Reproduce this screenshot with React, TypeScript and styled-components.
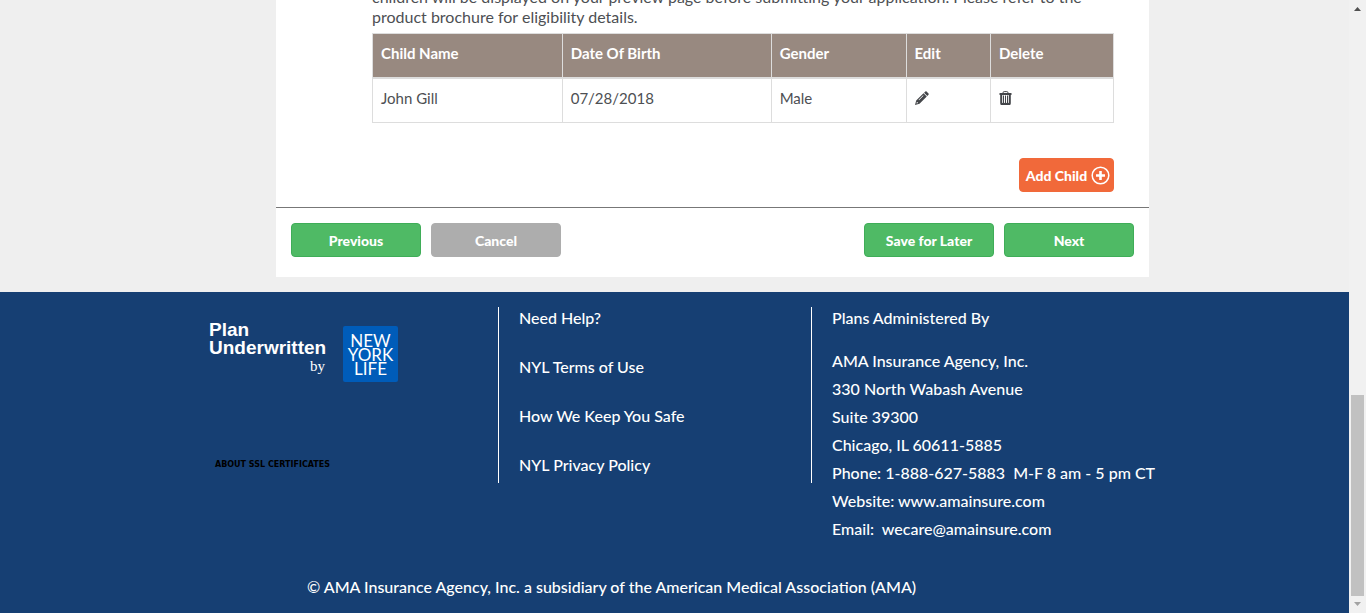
import React from "react";
import styled, { createGlobalStyle, css } from "styled-components";

const GlobalStyle = createGlobalStyle`
  *, *::before, *::after { box-sizing: border-box; }
  body {
    margin: 0;
    background: #efefef;
    color: #4d4f53;
    font-family: Lato, "Liberation Sans", sans-serif;
    font-size: 15px;
    line-height: 20px;
  }
`;

const Window = styled.div`
  display: grid;
  grid-template-columns: minmax(0, 1fr) 17px;
  height: 100vh;
  overflow: hidden;
`;

const Page = styled.div`
  display: flex;
  flex-direction: column;
  justify-content: flex-end;
  min-height: 0;
  overflow: hidden;
`;

const ScrollTrack = styled.div`
  display: flex;
  flex-direction: column;
  justify-content: space-between;
  align-items: center;
  padding: 7px 2px;
  background: #f1f1f1;
`;

const ScrollThumb = styled.div`
  width: 13px;
  height: 201px;
  margin: auto 0 6px;
  background: #c1c1c1;
`;

const Card = styled.main`
  flex: none;
  margin: 0 200px 15px 276px;
  background: #fff;
`;

const Section = styled.section`
  padding: 0 35px 15px 96px;
  border-bottom: 1px solid #777;
`;

const Note = styled.p`
  margin: 0 0 6px;
  font-size: 16px;
`;

const Table = styled.table`
  width: 100%;
  table-layout: fixed;
  border-collapse: collapse;
  border: 1px solid #ddd;
`;

const cell = css`
  padding: 9px 8px;
  border: 1px solid #ddd;
  text-align: left;
  vertical-align: top;
`;

const Th = styled.th`
  ${cell}
  height: 44px;
  border-bottom-width: 2px;
  background: #988980;
  color: #fff;
  font-weight: 700;
`;

const Td = styled.td`
  ${cell}
  height: 45px;
`;

const IconButton = styled.button`
  display: block;
  margin: 3px 0;
  padding: 0;
  border: 0;
  background: none;
  color: #44464a;
  cursor: pointer;

  svg { display: block; }
`;

const AddRow = styled.div`
  display: flex;
  justify-content: flex-end;
  margin-top: 35px;
`;

const Button = styled.button<{ $tone?: "green" | "grey" | "orange" }>`
  display: inline-flex;
  align-items: center;
  justify-content: center;
  gap: 4px;
  width: ${(p) => (p.$tone === "orange" ? "95px" : "130px")};
  height: 34px;
  padding: ${(p) => (p.$tone === "orange" ? "2px 0 0 3px" : "2px 0 0")};
  border: 1px solid
    ${(p) => (p.$tone === "orange" ? "#f1693a" : p.$tone === "grey" ? "#adadad" : "#3fad58")};
  border-radius: 4px;
  background: ${(p) => (p.$tone === "orange" ? "#f1693a" : p.$tone === "grey" ? "#adadad" : "#4fba65")};
  color: #fff;
  font-family: inherit;
  font-size: 14px;
  font-weight: 900;
  line-height: 20px;
  white-space: nowrap;
  cursor: pointer;

  svg { flex: none; margin-bottom: 2px; }
`;

const Actions = styled.div`
  display: flex;
  justify-content: space-between;
  padding: 15px 15px 20px;
`;

const ButtonGroup = styled.div`
  display: flex;
  gap: 10px;
`;

const Footer = styled.footer`
  flex: none;
  padding: 15px 0 14px;
  background: #163f73;
  color: #fff;
  font-size: 16px;
  font-weight: 500;
`;

const FooterColumns = styled.div`
  display: grid;
  grid-template-columns: 289px 313px minmax(0, 1fr);
  align-items: start;
  padding-left: 209px;
`;

const Brand = styled.div`
  padding-top: 14px;
`;

const BrandRow = styled.div`
  display: flex;
  align-items: flex-start;
  gap: 18px;
`;

const Underwritten = styled.div`
  width: 116px;
  font-family: "Liberation Sans", Arial, sans-serif;
  font-size: 19px;
  font-weight: 700;
  line-height: 18px;
`;

const By = styled.div`
  font-family: "Liberation Serif", serif;
  font-size: 15px;
  font-weight: 400;
  line-height: 18px;
  text-align: right;
`;

const InsurerLogo = styled.div`
  width: 55px;
  height: 56px;
  margin-top: 5px;
  padding-top: 8px;
  border-radius: 2px;
  background: #005cb9;
  font-size: 17px;
  font-weight: 400;
  line-height: 14px;
  text-align: center;
`;

const SslLink = styled.a`
  display: block;
  margin: 73px 0 0 6px;
  color: #000;
  font-family: "DejaVu Sans", Verdana, sans-serif;
  font-size: 8px;
  font-weight: 700;
  line-height: 20px;
  text-decoration: none;
`;

const Links = styled.nav`
  display: flex;
  flex-direction: column;
  gap: 29px;
  height: 176px;
  padding: 1px 20px 0;
  border-left: 1px solid #fff;
`;

const FooterLink = styled.a`
  color: inherit;
  text-decoration: none;
`;

const ContactTitle = styled.div`
  height: 176px;
  padding: 1px 0 0 20px;
  border-left: 1px solid #fff;
`;

const Address = styled.address`
  margin-top: 19px;
  font-style: normal;
  line-height: 28px;
  white-space: pre;
`;

const Contact = styled.div`
  height: 244px;
`;

const Copyright = styled.p`
  margin: 24px 0 0 307px;
  line-height: 24px;
`;

const children = [{ name: "John Gill", birth: "07/28/2018", gender: "Male" }];

const Pencil = () => (
  <svg width="14" height="14" viewBox="0 0 14 14" fill="currentColor" aria-hidden="true">
    <path d="M10.3.5a1 1 0 0 1 1.3 0l1.900 1.900a1 1 0 0 1 0 1.300l-1.200 1.200-3.200-3.200z" />
    <path fillRule="evenodd" d="M8.500 2.200l3.300 3.300-7.300 7.300L0 14l1.200-4.500zM8.100 4.300 3.600 8.800l.4.4 4.500-4.500zM1.900 10.800l-.4 1.700 1.700-.4z" />
  </svg>
);

const Trash = () => (
  <svg width="13" height="14" viewBox="0 0 13 14" fill="none" stroke="currentColor" aria-hidden="true">
    <path d="M4 2.500V1.800Q4 .6 5.200.6h2.600Q9 .6 9 1.800v.7" strokeWidth="1" />
    <path d="M.5 3h12" strokeWidth="2" />
    <path d="M2.200 4v8.200q0 1 1 1h6.600q1 0 1-1V4" strokeWidth="2" />
    <path d="M4.500 4.500v8M6.500 4.500v8M8.500 4.500v8" strokeWidth="1" />
    <path d="M2 12.700h9" strokeWidth="1.600" />
  </svg>
);

const PlusCircle = () => (
  <svg width="19" height="19" viewBox="0 0 19 19" fill="none" stroke="currentColor" aria-hidden="true">
    <circle cx="9.500" cy="9.500" r="8.300" strokeWidth="1.500" />
    <path d="M9.500 5v9M5 9.500h9" strokeWidth="2.600" />
  </svg>
);

export default function App() {
  return (
    <>
      <GlobalStyle />
      <Window>
        <Page>
          <Card>
            <Section>
              <Note>
                children will be displayed on your preview page before submitting your application. Please refer to the
                <br />
                product brochure for eligibility details.
              </Note>
              <Table>
                <colgroup>
                  <col style={{ width: "25.6%" }} />
                  <col style={{ width: "28.2%" }} />
                  <col style={{ width: "18.2%" }} />
                  <col style={{ width: "11.4%" }} />
                  <col />
                </colgroup>
                <thead>
                  <tr>
                    <Th>Child Name</Th>
                    <Th>Date Of Birth</Th>
                    <Th>Gender</Th>
                    <Th>Edit</Th>
                    <Th>Delete</Th>
                  </tr>
                </thead>
                <tbody>
                  {children.map((c) => (
                    <tr key={c.name}>
                      <Td>{c.name}</Td>
                      <Td>{c.birth}</Td>
                      <Td>{c.gender}</Td>
                      <Td>
                        <IconButton aria-label={`Edit ${c.name}`}><Pencil /></IconButton>
                      </Td>
                      <Td>
                        <IconButton aria-label={`Delete ${c.name}`}><Trash /></IconButton>
                      </Td>
                    </tr>
                  ))}
                </tbody>
              </Table>
              <AddRow>
                <Button $tone="orange">Add Child<PlusCircle /></Button>
              </AddRow>
            </Section>
            <Actions>
              <ButtonGroup>
                <Button>Previous</Button>
                <Button $tone="grey">Cancel</Button>
              </ButtonGroup>
              <ButtonGroup>
                <Button>Save for Later</Button>
                <Button>Next</Button>
              </ButtonGroup>
            </Actions>
          </Card>
          <Footer>
            <FooterColumns>
              <Brand>
                <BrandRow>
                  <Underwritten>
                    Plan<br />Underwritten
                    <By>by</By>
                  </Underwritten>
                  <InsurerLogo>NEW<br />YORK<br />LIFE</InsurerLogo>
                </BrandRow>
                <SslLink href="#ssl">ABOUT SSL CERTIFICATES</SslLink>
              </Brand>
              <Links>
                <FooterLink href="#help">Need Help?</FooterLink>
                <FooterLink href="#terms">NYL Terms of Use</FooterLink>
                <FooterLink href="#safe">How We Keep You Safe</FooterLink>
                <FooterLink href="#privacy">NYL Privacy Policy</FooterLink>
              </Links>
              <Contact>
                <ContactTitle>
                  Plans Administered By
                  <Address>
                    AMA Insurance Agency, Inc.<br />
                    330 North Wabash Avenue<br />
                    Suite 39300<br />
                    Chicago, IL 60611-5885<br />
                    {"Phone: 1-888-627-5883  M-F 8 am - 5 pm CT"}<br />
                    Website: <FooterLink href="#website">www.amainsure.com</FooterLink><br />
                    {"Email:  "}<FooterLink href="#email">wecare@amainsure.com</FooterLink>
                  </Address>
                </ContactTitle>
              </Contact>
            </FooterColumns>
            <Copyright>© AMA Insurance Agency, Inc. a subsidiary of the American Medical Association (AMA)</Copyright>
          </Footer>
        </Page>
        <ScrollTrack aria-hidden="true">
          <svg width="7" height="4" viewBox="0 0 7 4"><path d="M3.500 0 7 4H0z" fill="#505050" /></svg>
          <ScrollThumb />
          <svg width="7" height="4" viewBox="0 0 7 4"><path d="M0 0h7L3.500 4z" fill="#a3a3a3" /></svg>
        </ScrollTrack>
      </Window>
    </>
  );
}
